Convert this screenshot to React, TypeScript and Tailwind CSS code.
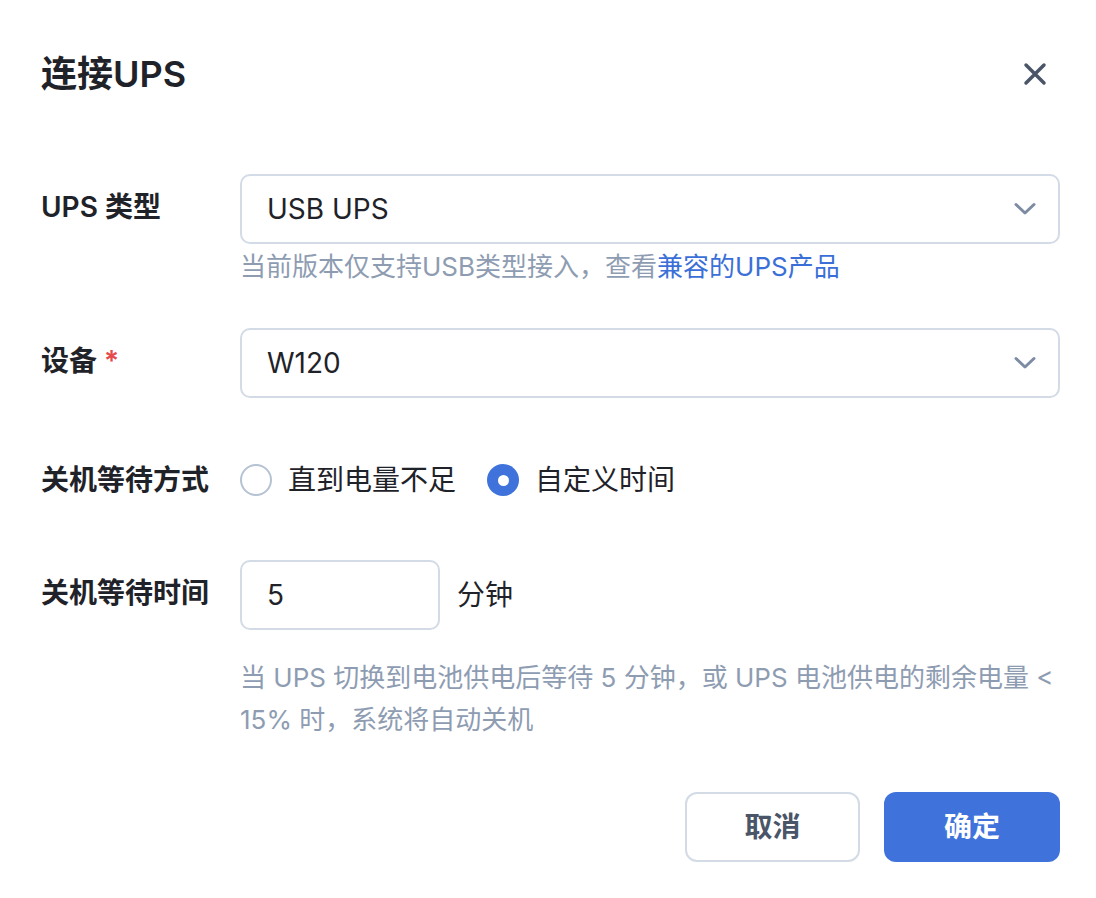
import { useState } from 'react'

const FONT = 'font-["Inter","Noto_Sans_CJK_SC",sans-serif]'

function Chevron() {
  return (
    <svg width="24" height="14" viewBox="0 0 24 14" fill="none">
      <path d="M3 2.5 L12 11 L21 2.5" stroke="#7d8ba3" strokeWidth="3" strokeLinecap="round" strokeLinejoin="round" />
    </svg>
  )
}

function Select({ value }: { value: string }) {
  return (
    <div className="flex h-[70px] w-full items-center justify-between rounded-[10px] border-2 border-[#d3dbe6] bg-white pl-[25px] pr-[21px]">
      <span className="text-[28px] text-[#1f2329]">{value}</span>
      <Chevron />
    </div>
  )
}

function Radio({ checked, label, onClick }: { checked: boolean; label: string; onClick: () => void }) {
  return (
    <button onClick={onClick} className="flex items-center gap-[16px] cursor-pointer">
      {checked ? (
        <span className="flex h-[32px] w-[32px] items-center justify-center rounded-full bg-[#3f73db]">
          <span className="h-[11px] w-[11px] rounded-full bg-white" />
        </span>
      ) : (
        <span className="h-[32px] w-[32px] rounded-full border-[2.5px] border-[#b5c2d4] bg-white" />
      )}
      <span className="text-[28px] text-[#1f2329]">{label}</span>
    </button>
  )
}

export default function App() {
  const [mode, setMode] = useState<'battery' | 'custom'>('custom')

  return (
    <div className={`${FONT} h-[898px] w-[1096px] bg-white pl-[41px] pr-[36px]`}>
      <div className="flex h-[148px] items-start justify-between pt-[50px]">
        <h1 className="text-[36px] font-semibold leading-[48px] text-[#1f2329]">连接UPS</h1>
        <button className="mr-[13px] mt-[12px] cursor-pointer">
          <svg width="24" height="24" viewBox="0 0 24 24" fill="none">
            <path d="M3 3 L21 21 M21 3 L3 21" stroke="#4a5568" strokeWidth="3.5" strokeLinecap="round" />
          </svg>
        </button>
      </div>

      <div className="mt-[26px] grid grid-cols-[199px_1fr]">
        <div className="text-[28px] font-semibold leading-[66px] text-[#1f2329]">UPS 类型</div>
        <div>
          <Select value="USB UPS" />
          <div className="mt-[5px] text-[26px] leading-[36px] text-[#8e9cb2]">
            当前版本仅支持USB类型接入，查看<a className="text-[#3b6fd8]">兼容的UPS产品</a>
          </div>
        </div>

        <div className="mt-[43px] text-[28px] font-semibold leading-[66px] text-[#1f2329]">
          设备 <span className="text-[#e5484d]">*</span>
        </div>
        <div className="mt-[43px]">
          <Select value="W120" />
        </div>

        <div className="mt-[47px] flex h-[70px] items-center text-[28px] font-semibold text-[#1f2329]">
          关机等待方式
        </div>
        <div className="mt-[47px] flex h-[70px] items-center gap-[31px]">
          <Radio checked={mode === 'battery'} label="直到电量不足" onClick={() => setMode('battery')} />
          <Radio checked={mode === 'custom'} label="自定义时间" onClick={() => setMode('custom')} />
        </div>

        <div className="mt-[45px] text-[28px] font-semibold leading-[66px] text-[#1f2329]">关机等待时间</div>
        <div className="mt-[45px]">
          <div className="flex items-center gap-[17px]">
            <div className="flex h-[70px] w-[200px] items-center rounded-[10px] border-2 border-[#d3dbe6] pl-[25px] text-[28px] text-[#1f2329]">
              5
            </div>
            <span className="text-[28px] text-[#1f2329]">分钟</span>
          </div>
          <p className="mt-[27px] text-[26px] leading-[42px] text-[#8e9cb2]">
            当 UPS 切换到电池供电后等待 5 分钟，或 UPS 电池供电的剩余电量 &lt; 15% 时，系统将自动关机
          </p>
        </div>
      </div>

      <div className="mt-[51px] flex justify-end gap-[24px]">
        <button className="h-[70px] w-[175px] rounded-[12px] border-2 border-[#d3dbe6] bg-white text-[28px] font-semibold text-[#4a5568]">
          取消
        </button>
        <button className="h-[70px] w-[176px] rounded-[12px] bg-[#3f73db] text-[28px] font-semibold text-white">
          确定
        </button>
      </div>
    </div>
  )
}
